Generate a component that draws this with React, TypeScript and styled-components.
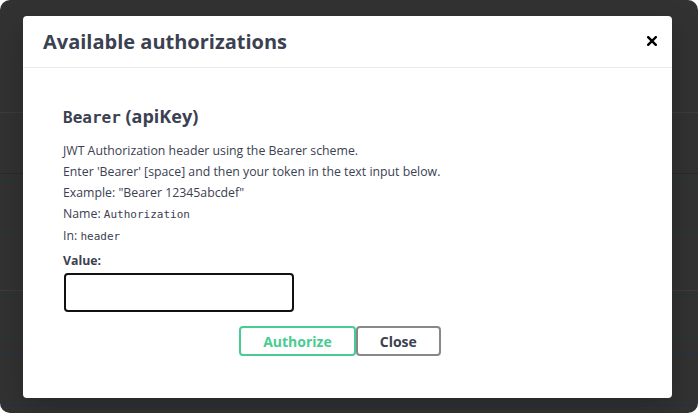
import styled, { createGlobalStyle } from "styled-components";

const GlobalStyle = createGlobalStyle`
  html, body {
    margin: 0;
    background: #ffffff;
  }
`;

export default function App() {
  return (
    <>
      <GlobalStyle />
      <Backdrop>
        <Modal>
          <Header>
            <Title>Available authorizations</Title>
            <CloseIcon aria-label="Close">
              <svg width="10" height="10" viewBox="0 0 10 10">
                <path d="M1.2 1.2 L8.8 8.8 M8.8 1.2 L1.2 8.8" stroke="#000" strokeWidth="2.4" strokeLinecap="square" />
              </svg>
            </CloseIcon>
          </Header>
          <Body>
            <SchemeTitle>
              <Code>Bearer</Code> (apiKey)
            </SchemeTitle>
            <Text>JWT Authorization header using the Bearer scheme.</Text>
            <Text>Enter 'Bearer' [space] and then your token in the text input below.</Text>
            <Text>Example: "Bearer 12345abcdef"</Text>
            <Text>
              Name: <Mono>Authorization</Mono>
            </Text>
            <Text>
              In: <Mono>header</Mono>
            </Text>
            <Label>Value:</Label>
            <Input type="text" />
            <Actions>
              <Button $variant="authorize">Authorize</Button>
              <Button>Close</Button>
            </Actions>
          </Body>
        </Modal>
      </Backdrop>
    </>
  );
}

const Backdrop = styled.div`
  width: 698px;
  height: 413px;
  box-sizing: border-box;
  padding: 16px 26px 0 23px;
  background-color: #323232;
  background-image:
    linear-gradient(#3c3c3c, #3c3c3c),
    linear-gradient(#2a2a2a, #2a2a2a),
    linear-gradient(#1f3b2f, #1f3b2f),
    linear-gradient(#1f3b2f, #1f3b2f),
    linear-gradient(#3c3c3c, #3c3c3c),
    linear-gradient(#1f3b2f, #1f3b2f),
    linear-gradient(#1f3b2f, #1f3b2f),
    linear-gradient(#22324a, #22324a),
    linear-gradient(#22324a, #22324a);
  background-size: 100% 1px;
  background-repeat: no-repeat;
  background-position:
    0 112px, 0 173px, 0 180px, 0 232px, 0 290px, 0 295px, 0 337px, 0 353px, 0 405px;
  border-radius: 10px;
`;

const Modal = styled.div`
  width: 649px;
  height: 382px;
  background: #ffffff;
  border-radius: 4px;
  box-shadow: 0 10px 30px rgba(0, 0, 0, 0.2);
  font-family: "Open Sans", "Noto Sans", sans-serif;
  color: #3b4151;
`;

const Header = styled.div`
  height: 51px;
  display: flex;
  align-items: center;
  justify-content: space-between;
  padding: 0 15px 0 20px;
  border-bottom: 1px solid #ebebeb;
`;

const Title = styled.h3`
  margin: 0;
  font-size: 20px;
  font-weight: 700;
  color: #3b4151;
`;

const CloseIcon = styled.button`
  border: none;
  background: none;
  padding: 0;
  width: 10px;
  height: 10px;
  display: flex;
  margin-top: -2px;
  cursor: pointer;
`;

const Body = styled.div`
  padding: 36px 55px 0 40px;
`;

const SchemeTitle = styled.h4`
  margin: 0 0 12px;
  font-size: 18px;
  font-weight: 700;
  color: #3b4151;
`;

const Code = styled.code`
  font-family: "DejaVu Sans Mono", monospace;
  font-size: 16px;
  font-weight: 700;
`;

const Text = styled.p`
  margin: 0;
  font-size: 12.3px;
  line-height: 21px;
  color: #3b4151;
`;

const Mono = styled.code`
  font-family: "DejaVu Sans Mono", monospace;
  font-size: 11px;
`;

const Label = styled.label`
  display: block;
  margin-top: 5px;
  font-size: 12.3px;
  font-weight: 700;
  line-height: 18px;
`;

const Input = styled.input`
  display: block;
  box-sizing: border-box;
  width: 230px;
  height: 39px;
  margin: 3px 0 0 1px;
  border: 2px solid #111;
  border-radius: 4px;
  background: #fff;
  outline: none;
`;

const Actions = styled.div`
  display: flex;
  justify-content: center;
  margin-top: 14px;
`;

const Button = styled.button<{ $variant?: "authorize" }>`
  box-sizing: border-box;
  height: 30px;
  padding: 0 22px;
  font-family: "Open Sans", "Noto Sans", sans-serif;
  font-size: 14px;
  font-weight: 700;
  background: transparent;
  border-radius: 4px;
  border: 2px solid ${(p) => (p.$variant === "authorize" ? "#49cc90" : "#888")};
  color: ${(p) => (p.$variant === "authorize" ? "#49cc90" : "#3b4151")};
  cursor: pointer;
`;
